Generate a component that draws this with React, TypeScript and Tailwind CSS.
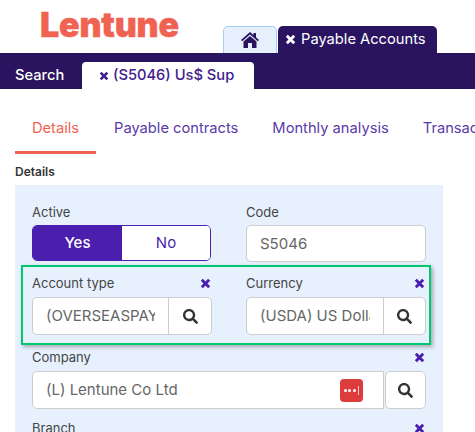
import { FaSearch } from "react-icons/fa";

const font = { fontFamily: "Inter, 'Noto Sans', sans-serif" };

function CloseIcon({ className }: { className: string }) {
  return (
    <svg viewBox="0 0 12 12" className={className} fill="none" stroke="currentColor" strokeWidth="3.2">
      <path d="M2 2 L10 10 M10 2 L2 10" />
    </svg>
  );
}

function HomeIcon() {
  return (
    <svg viewBox="0 0 18 16" className="h-[16px] w-[18px] text-[#2a1460]" fill="currentColor">
      <path d="M9 0 L12.5 3 V1 H15 V5.2 L18 8 L16.8 9.2 L9 2.6 L1.2 9.2 L0 8 Z" />
      <path d="M9 4 L15.5 9.5 V16 H11 V11 H7 V16 H2.5 V9.5 Z" />
    </svg>
  );
}

function Label({ text, clearable = false }: { text: string; clearable?: boolean }) {
  return (
    <div className="flex h-[15px] items-center justify-between text-[13px] leading-[15px] text-[#444]">
      <span>{text}</span>
      {clearable && <CloseIcon className="mr-[1px] h-[11px] w-[11px] text-[#4a1fae]" />}
    </div>
  );
}

function SearchInput({ value, width }: { value: string; width: string }) {
  return (
    <div className="mt-[6px] flex h-[38px] w-full overflow-hidden rounded-[5px] border border-[#ccc] bg-white">
      <div className={`${width} shrink-0 py-[8px] pl-[13px] pr-[13px] text-[15px] leading-[20px] text-[#666]`}>
        <div className="overflow-hidden whitespace-nowrap">{value}</div>
      </div>
      <div className="flex flex-1 items-center justify-center border-l border-[#ccc]">
        <FaSearch className="text-[15px] text-[#333]" />
      </div>
    </div>
  );
}

export default function App() {
  return (
    <div className="h-[432px] w-[475px] overflow-hidden bg-white" style={font}>
      <header className="flex h-[53px] items-end">
        <div className="mb-[12px] ml-[40px] w-[183px] shrink-0 text-[34px] font-black leading-[33px] tracking-[-0.2px] text-[#f06352] [-webkit-text-stroke:0.4px_#f06352]">
          Lentune
        </div>
        <div className="flex h-[27px] w-[54px] shrink-0 items-center justify-center rounded-t-[5px] border border-b-0 border-[#a9cdf5] bg-[#e6f0fd]">
          <HomeIcon />
        </div>
        <div className="ml-[1px] flex h-[27px] w-[159px] shrink-0 items-center rounded-t-[5px] bg-[#2a1460] pl-[7px] text-[14.7px] text-white">
          <CloseIcon className="mr-[5px] h-[11px] w-[11px]" />
          Payable Accounts
        </div>
      </header>

      <nav className="flex h-[36px] items-end bg-[#2a1460]">
        <div className="flex h-[27px] w-[82px] items-center pl-[15px] text-[14.7px] font-medium text-white">Search</div>
        <div className="flex h-[27px] w-[172px] items-center rounded-t-[4px] bg-white pl-[17px] text-[14.7px] font-medium text-[#41208f]">
          <CloseIcon className="mr-[4px] h-[10px] w-[10px]" />
          (S5046) Us$ Sup
        </div>
      </nav>

      <div className="flex h-[65px] items-start overflow-hidden pl-[15px] text-[14.7px] leading-[20px] text-[#5a3aa8]">
        <div className="h-[65px] w-[81px] shrink-0 border-b-[3px] border-[#f06352] pt-[29px] text-center text-[#f06352]">Details</div>
        <div className="ml-[18px] shrink-0 pt-[29px] whitespace-nowrap">Payable contracts</div>
        <div className="ml-[34px] shrink-0 pt-[29px] whitespace-nowrap">Monthly analysis</div>
        <div className="ml-[34px] shrink-0 pt-[29px] whitespace-nowrap">Transactions</div>
      </div>

      <div className="mx-[15px] mt-[10px] text-[12px] font-semibold leading-[16px] text-[#333]">Details</div>

      <section className="mx-[15px] mt-[5px] w-[428px] bg-[#e7f1fe] px-[17px] pt-[20px]">
        <div className="grid grid-cols-[180px_180px] gap-x-[34px]">
          <div>
            <Label text="Active" />
            <div className="mt-[5px] flex h-[36px] w-[179px] overflow-hidden rounded-[5px] border border-[#4a1fae] text-[15px] font-medium">
              <div className="flex w-[89px] items-center justify-center bg-[#4a1fae] text-white">Yes</div>
              <div className="flex flex-1 items-center justify-center bg-white font-normal text-[#4a1fae]">No</div>
            </div>
          </div>
          <div>
            <Label text="Code" />
            <div className="mt-[5px] h-[37px] rounded-[5px] border border-[#ccc] bg-white py-[8px] pl-[13px] text-[15px] leading-[20px] text-[#666]">
              S5046
            </div>
          </div>
        </div>

        <div className="-ml-[11px] -mr-[5px] mt-[3px] grid h-[80px] grid-cols-[180px_180px] gap-x-[34px] border-2 border-[#00c86f] pl-[9px] pt-[9px] shadow-[2px_2px_4px_rgba(0,0,0,0.3)]">
          <div>
            <Label text="Account type" clearable />
            <SearchInput value="(OVERSEASPAY" width="w-[135px]" />
          </div>
          <div>
            <Label text="Currency" clearable />
            <SearchInput value="(USDA) US Dollar" width="w-[136px]" />
          </div>
        </div>

        <div className="mt-[5px]">
          <Label text="Company" clearable />
          <div className="mt-[6px] flex h-[38px]">
            <div className="flex w-[352px] items-center justify-between rounded-l-[5px] border border-[#ccc] bg-white pl-[13px] pr-[20px] text-[15px] text-[#666]">
              (L) Lentune Co Ltd
              <div className="flex h-[23px] w-[23px] items-center justify-center gap-[1.5px] rounded-[4px] bg-[#dd3c3c]">
                <span className="h-[3px] w-[3px] rounded-full bg-white" />
                <span className="h-[3px] w-[3px] rounded-full bg-white" />
                <span className="h-[3px] w-[3px] rounded-full bg-white" />
                <span className="ml-[1px] h-[9px] w-[1px] bg-[#f7caca]" />
              </div>
            </div>
            <div className="ml-[1px] flex flex-1 items-center justify-center rounded-[5px] border border-[#ccc] bg-white">
              <FaSearch className="text-[15px] text-[#333]" />
            </div>
          </div>
        </div>

        <div className="mt-[12px]">
          <Label text="Branch" clearable />
        </div>
      </section>
    </div>
  );
}
